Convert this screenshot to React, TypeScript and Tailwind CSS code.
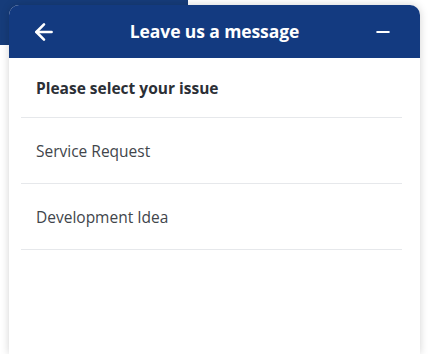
import { ArrowLeft, Minus } from "lucide-react";

const issues = ["Service Request", "Development Idea"];

export default function App() {
  return (
    <div className="relative h-[354px] w-[429px] overflow-hidden bg-white font-['Open_Sans',sans-serif]">
      <div className="h-[45px] w-[188px] bg-[#163c7a]" />
      <div className="absolute bottom-0 left-[9px] top-[5px] w-[411px] rounded-t-[10px] bg-white shadow-[0_0_8px_rgba(0,0,0,0.18)]">
        <div className="grid h-[53px] grid-cols-[1fr_auto_1fr] items-center rounded-t-[10px] bg-[#133a80] px-[24px] text-white">
          <ArrowLeft size={26} strokeWidth={2.4} className="-ml-[2px]" />
          <h1 className="text-[17.5px] font-bold tracking-[-0.1px]">Leave us a message</h1>
          <Minus size={20} strokeWidth={2.3} className="mr-[3px] justify-self-end" />
        </div>
        <div className="pl-[12px] pr-[18px]">
          <div className="flex h-[60px] items-center border-b border-[#e6e8eb] px-[15px] pt-[2px] text-[15.5px] font-bold text-[#2b2f36]">
            Please select your issue
          </div>
          {issues.map((item) => (
            <div
              key={item}
              className="flex h-[66px] items-center border-b border-[#e6e8eb] px-[15px] pt-[3px] text-[15.5px] text-[#41454b]"
            >
              {item}
            </div>
          ))}
        </div>
      </div>
    </div>
  );
}
